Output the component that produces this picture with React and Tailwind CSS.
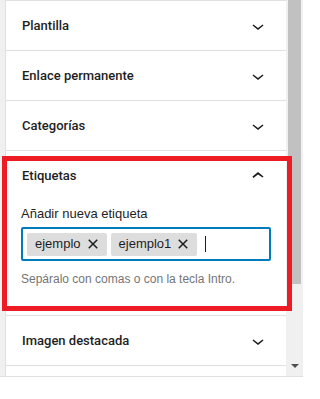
const ChevronDown = () => (
  <svg viewBox="0 0 24 24" width="24" height="24" className="fill-[#1e1e1e]">
    <path d="M17.5 11.6L12 16l-5.5-4.4.9-1.2L12 14l4.6-3.6z" />
  </svg>
);

const ChevronUp = () => (
  <svg viewBox="0 0 24 24" width="24" height="24" className="fill-[#1e1e1e]">
    <path d="M6.5 12.4L12 8l5.5 4.4-.9 1.2L12 10.4l-4.6 3.6-.9-1.2z" />
  </svg>
);

const CloseSmall = () => (
  <svg viewBox="0 0 24 24" width="24" height="24" className="fill-[#1e1e1e]">
    <path d="M12 13.06l3.712 3.713 1.061-1.06L13.061 12l3.712-3.712-1.06-1.06L12 10.938 8.288 7.227l-1.061 1.06L10.939 12l-3.712 3.712 1.06 1.061L12 13.061z" />
  </svg>
);

const Title = ({ children }) => (
  <span className="font-['Roboto',sans-serif] text-[13px] font-medium text-[#1e1e1e]">{children}</span>
);

const PanelRow = ({ title }) => (
  <div className="h-[50px] flex items-center justify-between px-[16px] border-b border-[#e0e0e0]">
    <Title>{title}</Title>
    <ChevronDown />
  </div>
);

const Token = ({ label }) => (
  <span className="h-[23px] flex items-center bg-[#ddd] rounded-[2px] pl-[8px] pr-[2px] text-[13px] text-[#1e1e1e]">
    {label}
    <CloseSmall />
  </span>
);

export default function App() {
  return (
    <div
      className="relative w-[303px] h-[399px] bg-white overflow-hidden"
      style={{ fontFamily: '"Liberation Sans", Arial, sans-serif' }}
    >
      <div className="flex h-[377px] bg-[#f0f0f0] border-b border-[#e0e0e0]">
        <div className="w-[5px] shrink-0" />
        {/* Sidebar panels */}
        <div className="w-[281px] shrink-0 bg-white border-l border-t border-[#e0e0e0]">
          <PanelRow title="Plantilla" />
          <PanelRow title="Enlace permanente" />
          <PanelRow title="Categorías" />

          <div className="border-b border-[#e0e0e0] pb-[28px]">
            <div className="h-[50px] flex items-center justify-between px-[16px]">
              <Title>Etiquetas</Title>
              <ChevronUp />
            </div>
            <div className="px-[15px]">
              <div className="text-[13px] leading-[20px] text-[#1e1e1e] mt-[3px] mb-[3px]">
                Añadir nueva etiqueta
              </div>
              <div className="h-[34px] flex items-center gap-[4px] px-[4px] border-2 border-[#007cba] rounded-[2px]">
                <Token label="ejemplo" />
                <Token label="ejemplo1" />
                <span className="ml-[4px] w-[1px] h-[16px] bg-[#1e1e1e]" />
              </div>
              <div className="mt-[10px] text-[12px] leading-[16px] text-[#757575]">
                Sepáralo con comas o con la tecla Intro.
              </div>
            </div>
          </div>

          <PanelRow title="Imagen destacada" />
        </div>
        {/* Scrollbar */}
        <div className="w-[17px] shrink-0 px-[2px] flex flex-col justify-between">
          <div className="h-[284px] bg-[#c1c1c1]" />
          <div className="h-[20px] flex items-center justify-center">
            <span className="w-0 h-0 border-l-[4px] border-r-[4px] border-t-[4px] border-l-transparent border-r-transparent border-t-[#505050]" />
          </div>
        </div>
      </div>

      {/* Highlight annotation */}
      <div className="absolute left-[2px] top-[156px] w-[290px] h-[155px] border-[5px] border-[#ed1c24]" />
    </div>
  );
}
